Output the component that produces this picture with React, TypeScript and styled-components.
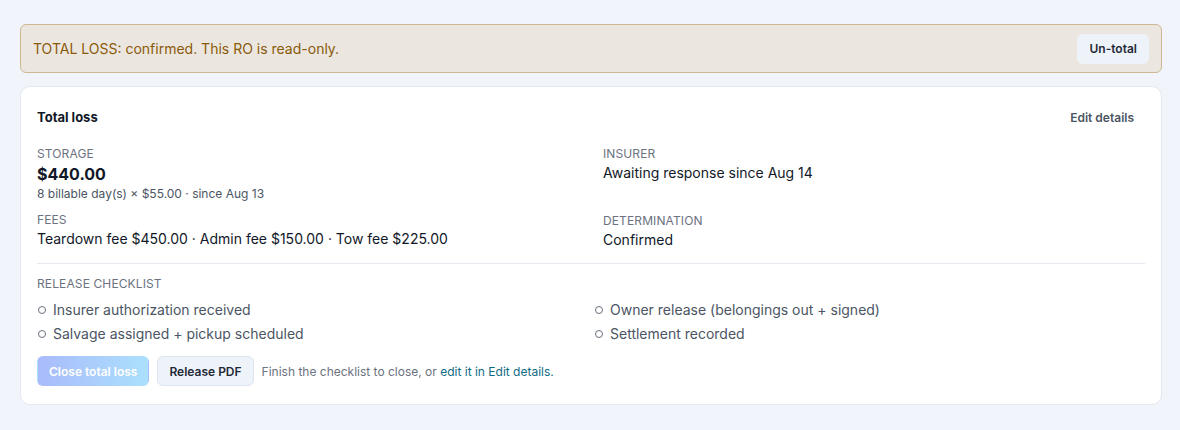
import styled, { createGlobalStyle } from 'styled-components'

const GlobalStyle = createGlobalStyle`
  * { box-sizing: border-box; }
  body {
    margin: 0;
    background: #f1f4fa;
    font-family: Inter, "Noto Sans", sans-serif;
    color: #111827;
  }
`

const Page = styled.main`
  padding: 24px 18px 20px 20px;
  display: flex;
  flex-direction: column;
  gap: 13px;
`

const Banner = styled.div`
  height: 49px;
  display: flex;
  align-items: center;
  justify-content: space-between;
  padding: 0 12px 0 12px;
  background: #ebe6df;
  border: 1px solid #cdb892;
  border-radius: 6px;
  color: #8a5a0b;
  font-size: 14px;
`

const Button = styled.button<{ $variant?: 'primary' | 'soft' }>`
  height: 30px;
  padding: 0 11px;
  border-radius: 6px;
  font-family: inherit;
  font-size: 12px;
  font-weight: 600;
  cursor: pointer;
  border: 1px solid ${p => (p.$variant === 'primary' ? 'transparent' : '#dde5f0')};
  color: ${p => (p.$variant === 'primary' ? '#ffffff' : '#1f2937')};
  background: ${p =>
    p.$variant === 'primary'
      ? 'linear-gradient(90deg, #a9bbfb 0%, #abe0fd 100%)'
      : '#eef3fa'};
  &:disabled { cursor: default; }
`

const BannerButton = styled(Button)`
  border-color: transparent;
`

const Card = styled.section`
  background: #ffffff;
  border: 1px solid #e3e8f0;
  border-radius: 10px;
  padding: 22px 16px 18px 16px;
`

const CardHeader = styled.div`
  display: flex;
  justify-content: space-between;
  align-items: center;
  margin-bottom: 21px;
`

const Title = styled.h2`
  margin: 0;
  font-size: 13px;
  font-weight: 700;
  color: #111827;
`

const LinkButton = styled.button`
  background: none;
  border: 0;
  padding: 0 11px 0 0;
  font-family: inherit;
  font-size: 12px;
  font-weight: 600;
  color: #4b5563;
  cursor: pointer;
`

const Grid = styled.div`
  display: grid;
  grid-template-columns: 1fr 1fr;
  column-gap: 24px;
`

const Field = styled.div<{ $minHeight?: number }>`
  display: flex;
  flex-direction: column;
  margin-bottom: 10px;
  min-height: ${p => (p.$minHeight ? `${p.$minHeight}px` : 'auto')};
`

const Label = styled.div`
  font-size: 12px;
  color: #6b7280;
  text-transform: uppercase;
  line-height: 16px;
  letter-spacing: 0.01em;
`

const Value = styled.div<{ $big?: boolean }>`
  margin-top: ${p => (p.$big ? '1px' : '0')};
  font-size: ${p => (p.$big ? '16px' : '14px')};
  font-weight: ${p => (p.$big ? 700 : 400)};
  color: #111827;
  line-height: ${p => (p.$big ? '23px' : '21px')};
`

const Sub = styled.div`
  font-size: 12px;
  color: #4b5563;
  line-height: 16px;
`

const Divider = styled.hr`
  border: 0;
  border-top: 1px solid #e5e9f0;
  margin: 3px 0 12px 0;
`

const Checklist = styled.ul`
  list-style: none;
  margin: 8px 0 0 0;
  padding: 0;
  display: grid;
  grid-template-columns: 1fr 1fr;
  column-gap: 6px;
  row-gap: 4px;
`

const CheckItem = styled.li`
  display: flex;
  align-items: center;
  gap: 7px;
  font-size: 14px;
  line-height: 20px;
  color: #4b5563;
`

const Circle = styled.span`
  width: 8px;
  height: 8px;
  border: 1px solid #6b7280;
  border-radius: 50%;
  flex: none;
  margin-left: 1px;
`

const Actions = styled.div`
  display: flex;
  align-items: center;
  gap: 8px;
  margin-top: 12px;
`

const Hint = styled.span`
  font-size: 12px;
  color: #6b7280;
  a { color: #0f6b86; text-decoration: none; }
`

const leftItems = ['Insurer authorization received', 'Salvage assigned + pickup scheduled']
const rightItems = ['Owner release (belongings out + signed)', 'Settlement recorded']

export default function App() {
  const items = [leftItems[0], rightItems[0], leftItems[1], rightItems[1]]
  return (
    <>
      <GlobalStyle />
      <Page>
        <Banner>
          <span>TOTAL LOSS: confirmed. This RO is read-only.</span>
          <BannerButton>Un-total</BannerButton>
        </Banner>

        <Card>
          <CardHeader>
            <Title>Total loss</Title>
            <LinkButton>Edit details</LinkButton>
          </CardHeader>

          <Grid>
            <div>
              <Field>
                <Label>Storage</Label>
                <Value $big>$440.00</Value>
                <Sub>8 billable day(s) × $55.00 · since Aug 13</Sub>
              </Field>
              <Field>
                <Label>Fees</Label>
                <Value>Teardown fee $450.00 · Admin fee $150.00 · Tow fee $225.00</Value>
              </Field>
            </div>
            <div>
              <Field $minHeight={57}>
                <Label>Insurer</Label>
                <Value>Awaiting response since Aug 14</Value>
              </Field>
              <Field>
                <Label>Determination</Label>
                <Value>Confirmed</Value>
              </Field>
            </div>
          </Grid>

          <Divider />

          <Label>Release checklist</Label>
          <Checklist>
            {items.map(item => (
              <CheckItem key={item}>
                <Circle />
                {item}
              </CheckItem>
            ))}
          </Checklist>

          <Actions>
            <Button $variant="primary" disabled>Close total loss</Button>
            <Button>Release PDF</Button>
            <Hint>
              Finish the checklist to close, or <a href="#">edit it in Edit details.</a>
            </Hint>
          </Actions>
        </Card>
      </Page>
    </>
  )
}
